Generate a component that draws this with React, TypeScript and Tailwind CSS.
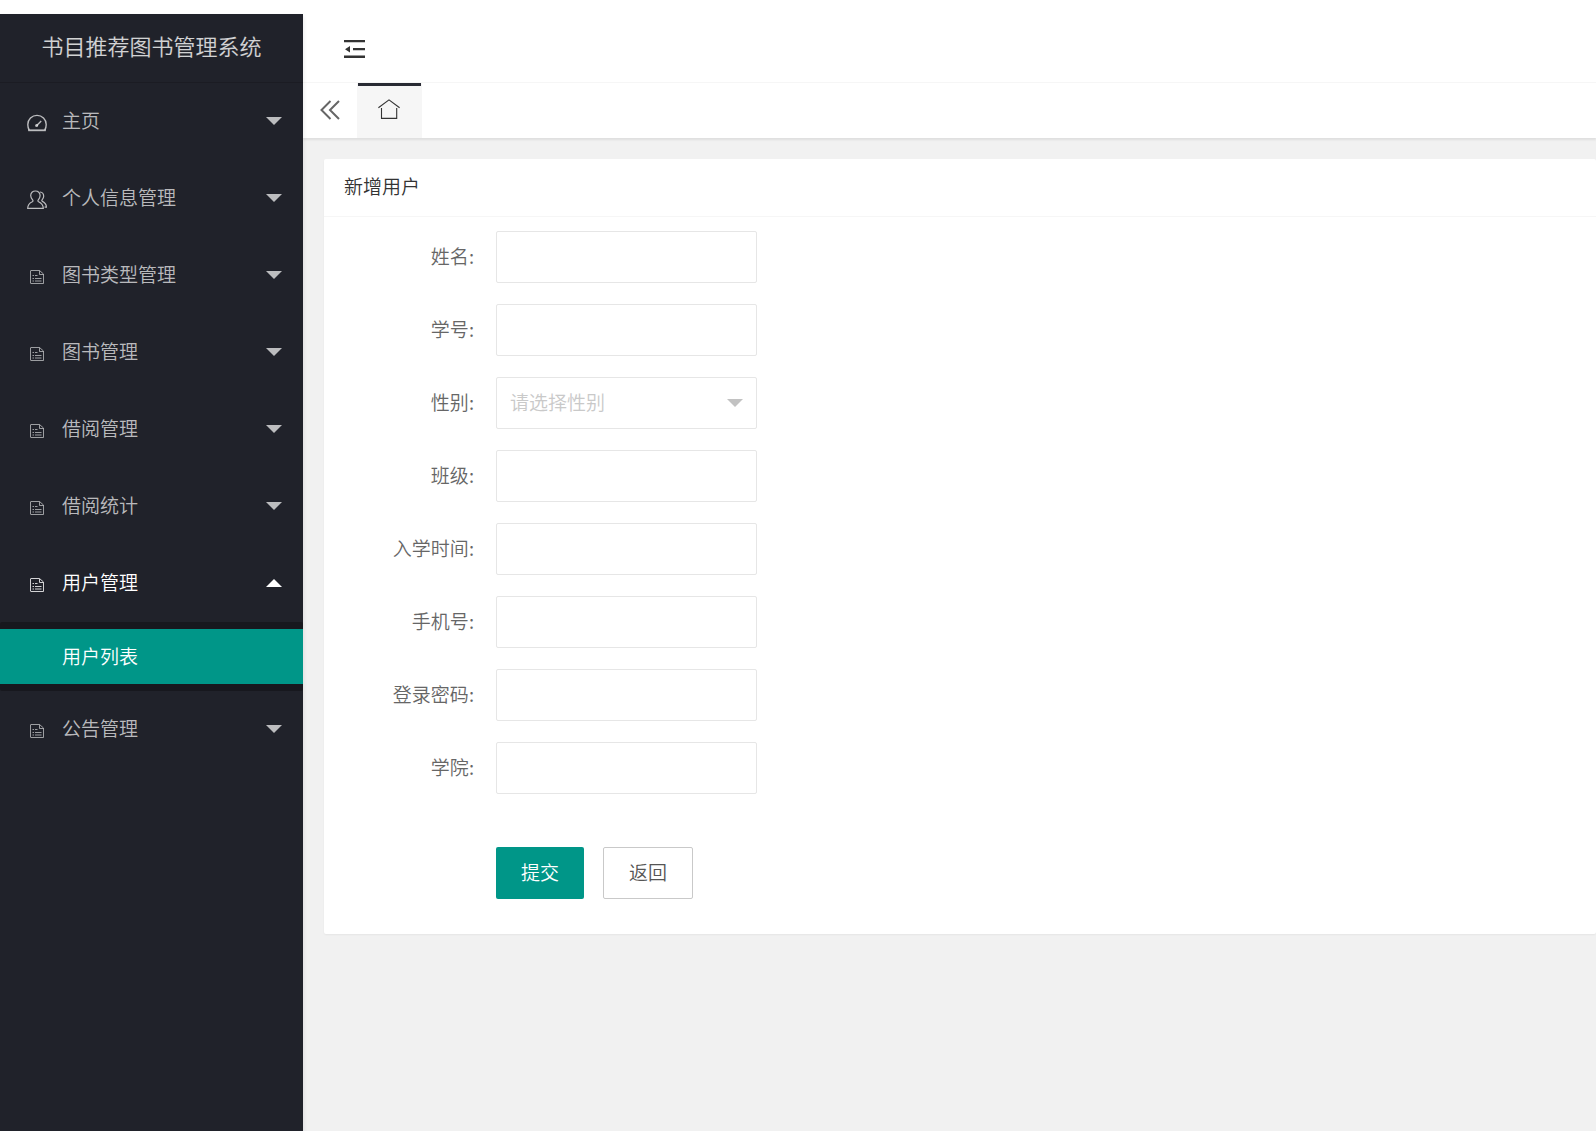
import type { ReactNode } from 'react';

const menus = [
  { name: '主页', icon: 'gauge' },
  { name: '个人信息管理', icon: 'users' },
  { name: '图书类型管理', icon: 'doc' },
  { name: '图书管理', icon: 'doc' },
  { name: '借阅管理', icon: 'doc' },
  { name: '借阅统计', icon: 'doc' },
  { name: '用户管理', icon: 'doc', children: ['用户列表'] },
  { name: '公告管理', icon: 'doc' },
];

const fields = [
  { id: 'name', label: '姓名', type: 'text' },
  { id: 'number', label: '学号', type: 'text' },
  { id: 'gender', label: '性别', type: 'select' },
  { id: 'class', label: '班级', type: 'text' },
  { id: 'date', label: '入学时间', type: 'text' },
  { id: 'phone', label: '手机号', type: 'text' },
  { id: 'password', label: '登录密码', type: 'password' },
  { id: 'college', label: '学院', type: 'text' },
];

function MenuIcon({ name }: { name: string }) {
  let shape: ReactNode;
  if (name === 'gauge') {
    shape = (
      <>
        <path d="M2.2 17C.9 15 .8 13.200.8 11.600a9.200 9.200 0 0 1 18.400 0c0 1.600-.1 3.400-1.400 5.400" strokeWidth="1.400" />
        <path d="M1.200 17.300h17.600" strokeWidth="1.800" />
        <path d="M9.800 12.400 14.200 8" strokeWidth="1.400" />
        <circle cx="9.600" cy="12.600" r="1.500" fill="currentColor" stroke="none" />
      </>
    );
  } else if (name === 'users') {
    shape = (
      <g strokeWidth="1.200">
        <path d="M.7 18.300c0-3.600 1.600-5.200 4.600-6.600.8-.4.900-1 .3-1.800C4.500 8.600 3.700 7.200 3.700 5.600 3.700 2.900 5.600 1 8.400 1s4.700 1.900 4.700 4.600c0 1.600-.7 3-1.800 4.300-.6.8-.5 1.400.3 1.800 3 1.400 4.700 3 4.700 6.600z" />
        <path d="M13 2c2.400.3 3.700 2 3.700 4.200 0 1.300-.6 2.500-1.600 3.600-.5.700-.4 1.200.3 1.600 2.500 1.200 4 2.800 4 5.800h-1.800" />
      </g>
    );
  } else {
    shape = (
      <g opacity="0.8">
        <path d="M4 3.500h8.500l4 3.500v9.500h-12.500a.5.500 0 0 1-.5-.5V4a.5.500 0 0 1 .5-.5zM12.500 3.700v3.800h3.800" />
        <path d="M5.500 8.500h1.500M5.500 11.500h1.500M8 11.500h6.500M5.500 14h1.500M8 14h6.500M8 8.500h2.500" />
      </g>
    );
  }
  return (
    <svg width="20" height="20" viewBox="0 0 20 20" fill="none" stroke="currentColor" className="mt-1 shrink-0">
      {shape}
    </svg>
  );
}

function Caret({ up = false }: { up?: boolean }) {
  return (
    <svg width="16" height="8" viewBox="0 0 16 8" fill="currentColor">
      <path d={up ? 'M0 8 8 0l8 8z' : 'M0 0h16L8 8z'} />
    </svg>
  );
}

function Sidebar() {
  return (
    <aside className="z-10 w-[303px] shrink-0 bg-[#20222A] text-white/70 shadow-[1px_2px_4px_rgba(0,0,0,0.08)]">
      <div className="h-[69px] pb-1.5 flex items-center justify-center text-[22px] text-white/80 border-b border-black/15">
        书目推荐图书管理系统
      </div>
      <nav>
        {menus.map((menu) => (
          <div key={menu.name}>
            <button
              className={`flex items-center w-full h-[77px] pb-0.5 pl-[27px] pr-[21px] cursor-pointer ${menu.children ? 'text-white' : 'hover:text-white'}`}
            >
              <MenuIcon name={menu.icon} />
              <span className="ml-[15px] pb-0.5 grow text-left">{menu.name}</span>
              <Caret up={!!menu.children} />
            </button>
            {menu.children && (
              <div className="py-[7px] rounded-xs bg-[#17181E]">
                {menu.children.map((child) => (
                  <a key={child} href="#" className="flex items-center h-[55px] pb-0.5 pl-[62px] bg-[#009688] text-white">
                    {child}
                  </a>
                ))}
              </div>
            )}
          </div>
        ))}
      </nav>
    </aside>
  );
}

function Header() {
  return (
    <header className="bg-white shadow-[0_2px_2px_rgba(0,0,0,0.08)]">
      <div className="flex items-center h-[69px] pt-px pl-[41px] border-b border-[#f6f6f6]">
        <button aria-label="收起菜单" className="cursor-pointer text-[#333]">
          <svg width="21" height="20" viewBox="0 0 21 20" fill="currentColor">
            <path d="M0 1h21v2.200H0zM9 9h12v2.200H9zM0 16.600h21v2.400H0zM6 7v6.400L1 10.200z" />
          </svg>
        </button>
      </div>
      <div className="flex h-[55px]">
        <button aria-label="向左滚动" className="flex items-center justify-center w-[54px] pb-0.5 cursor-pointer text-[#666]">
          <svg width="20" height="20" viewBox="0 0 20 20" fill="none" stroke="currentColor" strokeWidth="2">
            <path d="M10.500 1 1.500 10l9 9M19 1l-9 9 9 9" />
          </svg>
        </button>
        <a href="#" aria-label="首页" className="flex flex-col w-[65px] bg-[#f6f6f6] text-[#333]">
          <span className="h-[3px] mx-px bg-[#292B34]"></span>
          <span className="flex grow items-center justify-center pb-1.5">
            <svg width="23" height="20" viewBox="0 0 23 20" fill="none" stroke="currentColor" strokeWidth="1.100">
              <path d="M.4 8.800 11 .9l10.600 7.900M3.500 9v10.400h15.200V9" />
            </svg>
          </span>
        </a>
      </div>
    </header>
  );
}

function UserForm() {
  return (
    <section className="rounded-xs bg-white shadow-[0_1px_2px_rgba(0,0,0,0.05)]">
      <h2 className="flex items-center h-[58px] px-5 pb-1 border-b border-[#f6f6f6] text-[#333]">新增用户</h2>
      <form className="pt-[14px] pb-[35px]">
        <div className="flex flex-col gap-[21px]">
          {fields.map((field) => (
            <div key={field.id} className="flex items-center">
              <label htmlFor={field.id} className="w-[172px] pr-[22px] pb-0.5 text-right text-[#666]">
                {field.label}:
              </label>
              {field.type === 'select' ? (
                <div className="relative w-[261px]">
                  <select
                    id={field.id}
                    defaultValue=""
                    className="block w-full h-[52px] px-[13px] pb-0.5 appearance-none border border-[#e6e6e6] rounded-xs bg-white text-[#c9c9c9]"
                  >
                    <option value="">请选择性别</option>
                    <option>男</option>
                    <option>女</option>
                  </select>
                  <span className="absolute right-[14px] top-[22px] text-[#c2c2c2] pointer-events-none">
                    <Caret />
                  </span>
                </div>
              ) : (
                <input
                  id={field.id}
                  type={field.type}
                  className="w-[261px] h-[52px] px-[13px] border border-[#e6e6e6] rounded-xs bg-white"
                />
              )}
            </div>
          ))}
        </div>
        <div className="flex gap-[19px] mt-[53px] pl-[172px]">
          <button type="submit" className="w-[88px] h-[52px] pb-0.5 rounded-xs bg-[#009688] text-white cursor-pointer">
            提交
          </button>
          <button type="button" className="w-[90px] h-[52px] pb-0.5 rounded-xs border border-[#c9c9c9] bg-white text-[#555] cursor-pointer">
            返回
          </button>
        </div>
      </form>
    </section>
  );
}

export default function App() {
  return (
    <div className="flex min-h-screen pt-[14px] bg-white font-['Noto_Sans_CJK_SC',sans-serif] text-[19px] leading-7 font-[350]">
      <Sidebar />
      <div className="flex flex-col grow min-w-0 bg-[#f1f1f1]">
        <Header />
        <main className="pt-[21px] pl-[21px]">
          <UserForm />
        </main>
      </div>
    </div>
  );
}
